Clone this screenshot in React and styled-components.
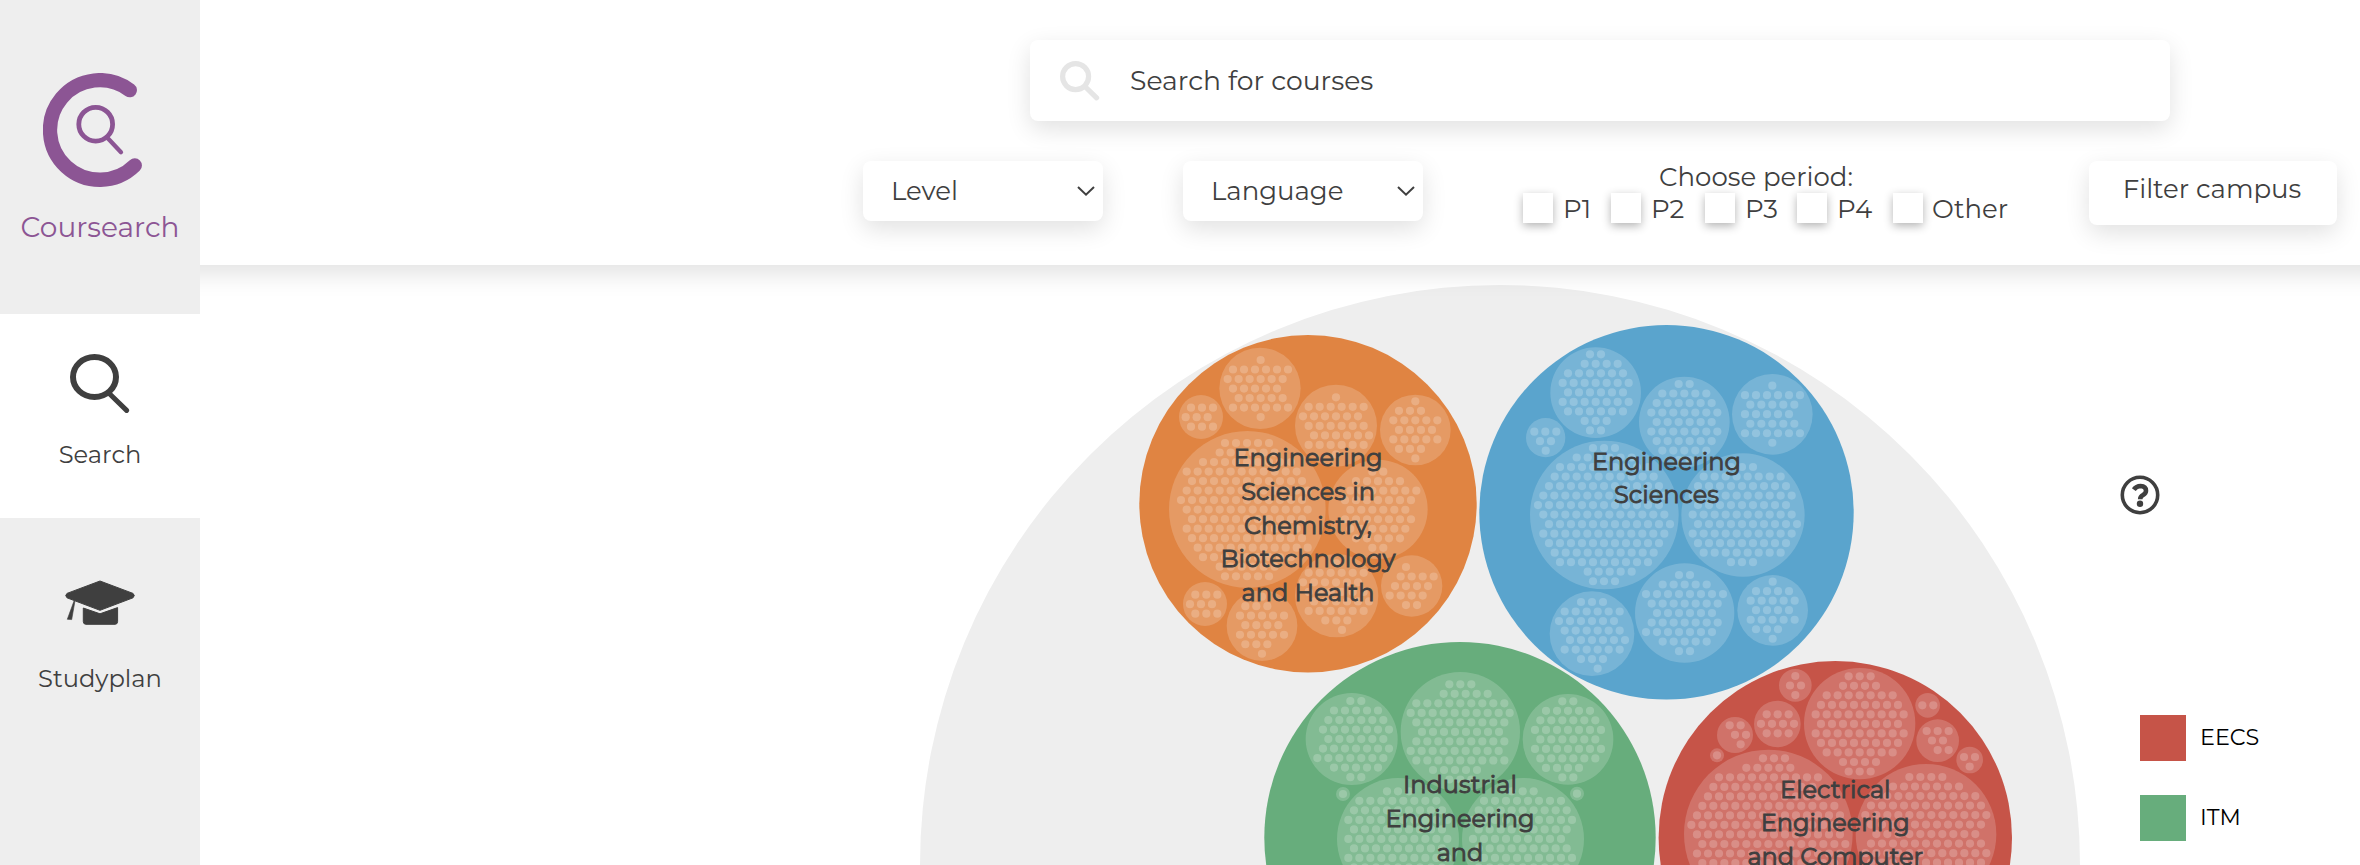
import React from "react";
import styled, { createGlobalStyle } from "styled-components";

const INK = "#3f3f3f";
const FONT = '"Montserrat", "Inter", "Open Sans", sans-serif';

const GlobalStyle = createGlobalStyle`
  * { box-sizing: border-box; }
  html, body { margin: 0; background: #fff; overflow: hidden; }
  body { font-family: ${FONT}; font-weight: 400; color: ${INK}; }
`;

const Page = styled.div`
  display: flex;
  height: 865px;
  overflow: hidden;
`;

const Sidebar = styled.nav`
  width: 200px;
  flex: none;
  background: #eee;
  position: relative;
  z-index: 2;
`;

const Brand = styled.div`
  height: 314px;
  padding-top: 73px;
  display: flex;
  flex-direction: column;
  align-items: center;
  color: #8c5594;
`;

const BrandName = styled.span`
  margin-top: 21px;
  font-size: 28px;
  line-height: 38px;
`;

const NavItem = styled.a`
  height: ${(p) => p.$height}px;
  padding-top: ${(p) => p.$top}px;
  background: ${(p) => (p.$active ? "#fff" : "transparent")};
  display: flex;
  flex-direction: column;
  align-items: center;
  font-size: 24.2px;
`;

const NavLabel = styled.span`
  margin-top: ${(p) => p.$gap}px;
  line-height: 32px;
`;

const Main = styled.main`
  flex: 1;
  min-width: 0;
  display: flex;
  flex-direction: column;
`;

/* Runs past both sides so that its shadow stays even up to the edges. */
const Header = styled.header`
  height: 265px;
  flex: none;
  margin: 0 -40px;
  padding: 40px 40px 0 680px;
  display: flex;
  flex-direction: column;
  align-items: center;
  gap: 40px;
  background: #fff;
  position: relative;
  z-index: 1;
  box-shadow: 0 8px 24px rgba(0, 0, 0, 0.12);
`;

const Card = styled.div`
  background: #fff;
  border-radius: 8px;
  box-shadow: 0 8px 24px rgba(0, 0, 0, 0.12);
  display: flex;
  flex: none;
`;

const SearchBox = styled(Card)`
  width: 1140px;
  height: 81px;
  padding: 0 30px;
  align-items: center;
  gap: 30px;
  font-size: 26.67px;
`;

const Filters = styled.div`
  display: flex;
  align-items: flex-start;
  gap: 80px;
  font-size: 26px;
`;

const Select = styled(Card)`
  width: 240px;
  height: 60px;
  padding: 0 8px 0 28px;
  align-items: center;
  justify-content: space-between;
`;

const FilterButton = styled(Card)`
  width: 248px;
  height: 64px;
  padding: 0 2px 8px 0;
  align-items: center;
  justify-content: center;
`;

const Periods = styled.div`
  width: 506px;
  flex: none;
  display: flex;
  flex-direction: column;
`;

const PeriodTitle = styled.span`
  line-height: 32px;
  text-align: center;
`;

const PeriodList = styled.div`
  margin-left: 20px;
  display: grid;
  grid-template-columns: 88px 94px 92px 96px 116px;
`;

const Option = styled.label`
  display: flex;
  align-items: center;
  gap: ${(p) => p.$gap}px;
  height: 30px;
  line-height: 32px;
`;

const OptionName = styled.span`
  padding-top: 2px;
`;

const Check = styled.span`
  width: 30px;
  height: 30px;
  flex: none;
  background: #fff;
  box-shadow: 0 3px 10px rgba(0, 0, 0, 0.3);
`;

const Content = styled.section`
  flex: 1;
  min-height: 0;
  display: flex;
`;

const Chart = styled.svg`
  width: 1900px;
  height: 600px;
  flex: none;
  display: block;
`;

const Aside = styled.aside`
  flex: 1;
  padding: 210px 0 0 20px;
`;

const Legend = styled.ul`
  list-style: none;
  margin: 200px 0 0 20px;
  padding: 0;
  display: grid;
  gap: 34px;
`;

const LegendItem = styled.li`
  display: flex;
  align-items: center;
  gap: 14px;
  height: 46px;
  color: #000;
  font-size: 22.3px;
`;

const Swatch = styled.span`
  width: 46px;
  height: 46px;
  background: ${(p) => p.$color};
`;

const LegendText = styled.span`
  padding-bottom: 2px;
`;

const Svg = styled.svg`
  display: block;
  flex: none;
`;

const SchoolLine = styled.text`
  font-family: ${FONT};
  font-size: 24px;
  font-weight: 400;
  fill: ${INK};
  stroke: ${INK};
  stroke-width: 0.9px;
  text-anchor: middle;
`;

const ORANGE = "#e08442";
const BLUE = "#5aa4cd";
const GREEN = "#67ad7c";
const RED = "#c65448";

// Lattice units: three per pixel. Courses sit on a hexagonal lattice.
const DX = 33;
const DY = 28.55;

// Each programme: [cx, cy, r, y of first row, [[x of first course, count], ...]]
const schools = [
  {
    color: ORANGE, cx: 1308, cy: 503.7, r: 168.7, ox: 1120, oy: 310, base: 466.3,
    lines: ["Engineering", "Sciences in", "Chemistry,", "Biotechnology", "and Health"],
    groups: [
      [420, 235, 122, 150, [[422, 1], [339, 6], [323, 6], [339, 5], [356, 5], [339, 6], [422, 1]]],
      [243, 321, 66, 293, [[213, 3], [197, 3], [213, 3]]],
      [648, 347, 123, 262, [[648, 1], [566, 6], [549, 6], [566, 6], [582, 6], [566, 6], [648, 1]]],
      [886, 360, 106, 274, [[886, 1], [837, 3], [820, 5], [837, 4], [820, 5], [837, 3], [886, 1]]],
      [382, 598, 235, 399, [[315, 5], [299, 6], [249, 9], [200, 11], [216, 11], [200, 12], [183, 12], [200, 12], [216, 11], [200, 11], [216, 11], [233, 11], [249, 9], [299, 6], [315, 5]]],
      [774, 598, 149, 485, [[757, 2], [708, 5], [691, 7], [675, 7], [691, 6], [675, 7], [691, 6], [708, 5], [757, 2]]],
      [875, 828, 92, 771, [[858, 1], [842, 4], [825, 4], [809, 4], [858, 2]]],
      [255, 882, 66, 854, [[226, 3], [210, 3], [226, 3]]],
      [426, 947, 106, 860, [[426, 1], [376, 3], [360, 5], [376, 4], [360, 5], [376, 3], [426, 1]]],
      [650, 857, 125, 760, [[649, 1], [566, 6], [549, 6], [566, 6], [582, 6], [566, 6], [616, 3], [666, 1]]],
    ],
  },
  {
    color: BLUE, cx: 1666.5, cy: 512.3, r: 187.2, ox: 1460, oy: 300, base: 469.5,
    lines: ["Engineering", "Sciences"],
    groups: [
      [407, 278, 136, 163, [[390, 2], [374, 4], [324, 6], [308, 7], [324, 6], [308, 7], [324, 6], [374, 3], [390, 2]]],
      [257, 413, 59, 395, [[223, 3], [240, 2], [257, 1]]],
      [673, 366, 136, 252, [[656, 2], [607, 5], [590, 6], [574, 7], [590, 6], [574, 7], [590, 6], [607, 5], [656, 2]]],
      [937, 343, 121, 257, [[937, 1], [855, 6], [871, 5], [855, 5], [871, 5], [855, 6], [937, 1]]],
      [433, 645, 223, 444, [[399, 3], [350, 6], [300, 9], [284, 10], [267, 11], [250, 12], [234, 12], [250, 12], [267, 12], [250, 12], [267, 11], [284, 10], [300, 9], [383, 5], [399, 3]]],
      [849, 645, 185, 501, [[813, 3], [731, 8], [714, 9], [698, 10], [714, 9], [698, 10], [714, 10], [698, 10], [714, 9], [731, 8], [813, 3]]],
      [396, 1001, 127, 906, [[363, 3], [314, 6], [297, 6], [314, 6], [330, 6], [314, 6], [363, 3], [413, 1]]],
      [674, 939, 149, 825, [[657, 2], [608, 5], [558, 8], [575, 7], [591, 6], [575, 7], [558, 7], [608, 5], [657, 2]]],
      [938, 931, 106, 845, [[938, 1], [888, 4], [872, 5], [888, 4], [872, 5], [888, 3], [938, 1]]],
    ],
  },
  {
    color: GREEN, cx: 1460, cy: 837.7, r: 195.7, ox: 1240, oy: 620, base: 793.3,
    lines: ["Industrial", "Engineering", "and"],
    groups: [
      [335, 357, 138, 243, [[331, 2], [282, 5], [265, 6], [249, 7], [265, 6], [249, 7], [232, 7], [282, 5], [331, 2]]],
      [661, 335, 179, 193, [[628, 3], [611, 5], [529, 9], [512, 10], [529, 9], [546, 8], [529, 9], [512, 9], [529, 9], [579, 5], [628, 3]]],
      [984, 358, 136, 244, [[967, 2], [918, 5], [901, 6], [885, 7], [901, 6], [885, 7], [901, 6], [918, 4], [967, 2]]],
      [309, 522, 21, 522, [[309, 1]]],
      [1011, 521, 21, 521, [[1011, 1]]],
      [474, 657, 183, 514, [[441, 3], [358, 8], [342, 9], [325, 10], [342, 9], [325, 10], [342, 9], [325, 10], [342, 9]]],
      [849, 657, 183, 514, [[815, 3], [732, 8], [716, 9], [699, 10], [716, 9], [699, 9], [716, 9], [699, 10], [716, 9]]],
    ],
  },
  {
    color: RED, cx: 1835.3, cy: 837.7, r: 176.7, ox: 1640, oy: 640, base: 797.5,
    lines: ["Electrical", "Engineering", "and Computer"],
    groups: [
      [466, 136, 49, 108, [[466, 1], [450, 2], [466, 1]]],
      [659, 251, 167, 109, [[626, 3], [609, 4], [560, 7], [543, 8], [527, 9], [543, 8], [527, 9], [543, 8], [560, 7], [609, 4], [626, 3]]],
      [863, 196, 37, 196, [[847, 2]]],
      [285, 285, 54, 256, [[269, 2], [285, 2], [302, 1]]],
      [412, 252, 70, 223, [[380, 3], [363, 4], [380, 3]]],
      [893, 302, 64, 273, [[860, 3], [876, 2], [893, 2]]],
      [989, 360, 40, 351, [[972, 2], [989, 1]]],
      [231, 346, 21, 346, [[231, 1]]],
      [385, 582, 253, 355, [[369, 3], [319, 5], [237, 10], [220, 10], [204, 11], [187, 13], [171, 14], [154, 14], [171, 14], [187, 14], [171, 14], [187, 13]]],
      [858, 583, 211, 411, [[808, 4], [759, 7], [709, 10], [693, 11], [676, 12], [693, 11], [709, 10], [693, 11], [676, 12], [693, 11]]],
    ],
  },
];

function Programme({ group: [cx, cy, r, top, rows] }) {
  return (
    <g>
      <circle cx={cx} cy={cy} r={r} fill="#fff" fillOpacity="0.18" />
      {rows.map(([x, n], i) =>
        Array.from({ length: n }, (_, k) => (
          <circle key={`${i}-${k}`} cx={x + k * DX} cy={top + i * DY} r="12.3" fill="#fff" fillOpacity="0.2" />
        ))
      )}
    </g>
  );
}

function School({ school: s }) {
  return (
    <g>
      <circle cx={s.cx} cy={s.cy} r={s.r} fill={s.color} />
      <g transform={`translate(${s.ox} ${s.oy}) scale(${1 / 3})`}>
        {s.groups.map((g, i) => <Programme key={i} group={g} />)}
      </g>
      {s.lines.map((text, i) => (
        <SchoolLine key={text} x={s.cx} y={s.base + i * 33.6}>{text}</SchoolLine>
      ))}
    </g>
  );
}

const Chevron = () => (
  <Svg width="18" height="12" viewBox="0 0 18 12" fill="none" stroke={INK} strokeWidth="2">
    <path d="M1 2l8 7.6L17 2" />
  </Svg>
);

const periods = [["P1", 10], ["P2", 10], ["P3", 10], ["P4", 10], ["Other", 9]];

export default function App() {
  return (
    <Page>
      <GlobalStyle />
      <Sidebar>
        <Brand>
          <Svg width="114" height="114" viewBox="43 73 114 114" fill="none" stroke="currentColor" strokeLinecap="round">
            <path d="M129.8 90.2A49.8 49.8 0 1 0 134.8 165.4" strokeWidth="14.3" />
            <circle cx="95.7" cy="124.2" r="16.9" strokeWidth="4.8" />
            <path d="M108.3 138.8L121 152.3" strokeWidth="4.3" />
          </Svg>
          <BrandName>Coursearch</BrandName>
        </Brand>
        <NavItem $active $height={204} $top={40}>
          <Svg width="60" height="60" viewBox="70 354 60 60" fill="none" stroke={INK} strokeLinecap="round">
            <ellipse cx="94.5" cy="377" rx="21.5" ry="20" strokeWidth="6" />
            <path d="M109.5 393.8L126.6 410.4" strokeWidth="5" />
          </Svg>
          <NavLabel $gap={25}>Search</NavLabel>
        </NavItem>
        <NavItem $height={220} $top={62}>
          <Svg width="70" height="46" viewBox="65 580 70 46" fill={INK} stroke={INK} strokeLinejoin="round">
            <path d="M100 581L133 593.4Q135.5 595.5 133 597.8L100 610.3L67 597.8Q64.5 595.5 67 593.4Z" strokeWidth="1" />
            <path d="M74 601L67.3 619.3L71.7 619.6L74.9 601.3Z" strokeWidth="0.6" />
            <path d="M83.3 608L100 613.8L117.6 607.6V621.5Q117.6 624.3 115 624.3H86Q83.3 624.3 83.3 621.5Z" strokeWidth="1" />
          </Svg>
          <NavLabel $gap={37}>Studyplan</NavLabel>
        </NavItem>
      </Sidebar>
      <Main>
        <Header>
          <SearchBox>
            <Svg width="40" height="40" viewBox="0 0 40 40" fill="none" stroke="#e5e5e5" strokeLinecap="round">
              <circle cx="15.6" cy="15.6" r="13" strokeWidth="5.2" />
              <path d="M26 26.5L36.6 36.8" strokeWidth="5.2" />
            </Svg>
            <span>Search for courses</span>
          </SearchBox>
          <Filters>
            <Select>Level<Chevron /></Select>
            <Select>Language<Chevron /></Select>
            <Periods>
              <PeriodTitle>Choose period:</PeriodTitle>
              <PeriodList>
                {periods.map(([name, gap]) => (
                  <Option key={name} $gap={gap}>
                    <Check />
                    <OptionName>{name}</OptionName>
                  </Option>
                ))}
              </PeriodList>
            </Periods>
            <FilterButton>Filter campus</FilterButton>
          </Filters>
        </Header>
        <Content>
          <Chart viewBox="200 265 1900 600">
            <circle cx="1500" cy="865" r="580" fill="#eee" />
            {schools.map((s) => <School key={s.color} school={s} />)}
          </Chart>
          <Aside>
            <Svg width="40" height="40" viewBox="0 0 40 40" fill="none" stroke={INK}>
              <circle cx="20" cy="20" r="17.7" strokeWidth="3.6" />
              <path d="M13.8 14.6Q16.3 11 20.5 11Q26 11.2 26 15.7Q26 18.2 23 20Q20.2 21.5 20.2 24.2" strokeWidth="4.6" />
              <circle cx="20" cy="28.8" r="3.2" fill={INK} stroke="none" />
            </Svg>
            <Legend>
              <LegendItem><Swatch $color={RED} /><LegendText>EECS</LegendText></LegendItem>
              <LegendItem><Swatch $color={GREEN} /><LegendText>ITM</LegendText></LegendItem>
            </Legend>
          </Aside>
        </Content>
      </Main>
    </Page>
  );
}
